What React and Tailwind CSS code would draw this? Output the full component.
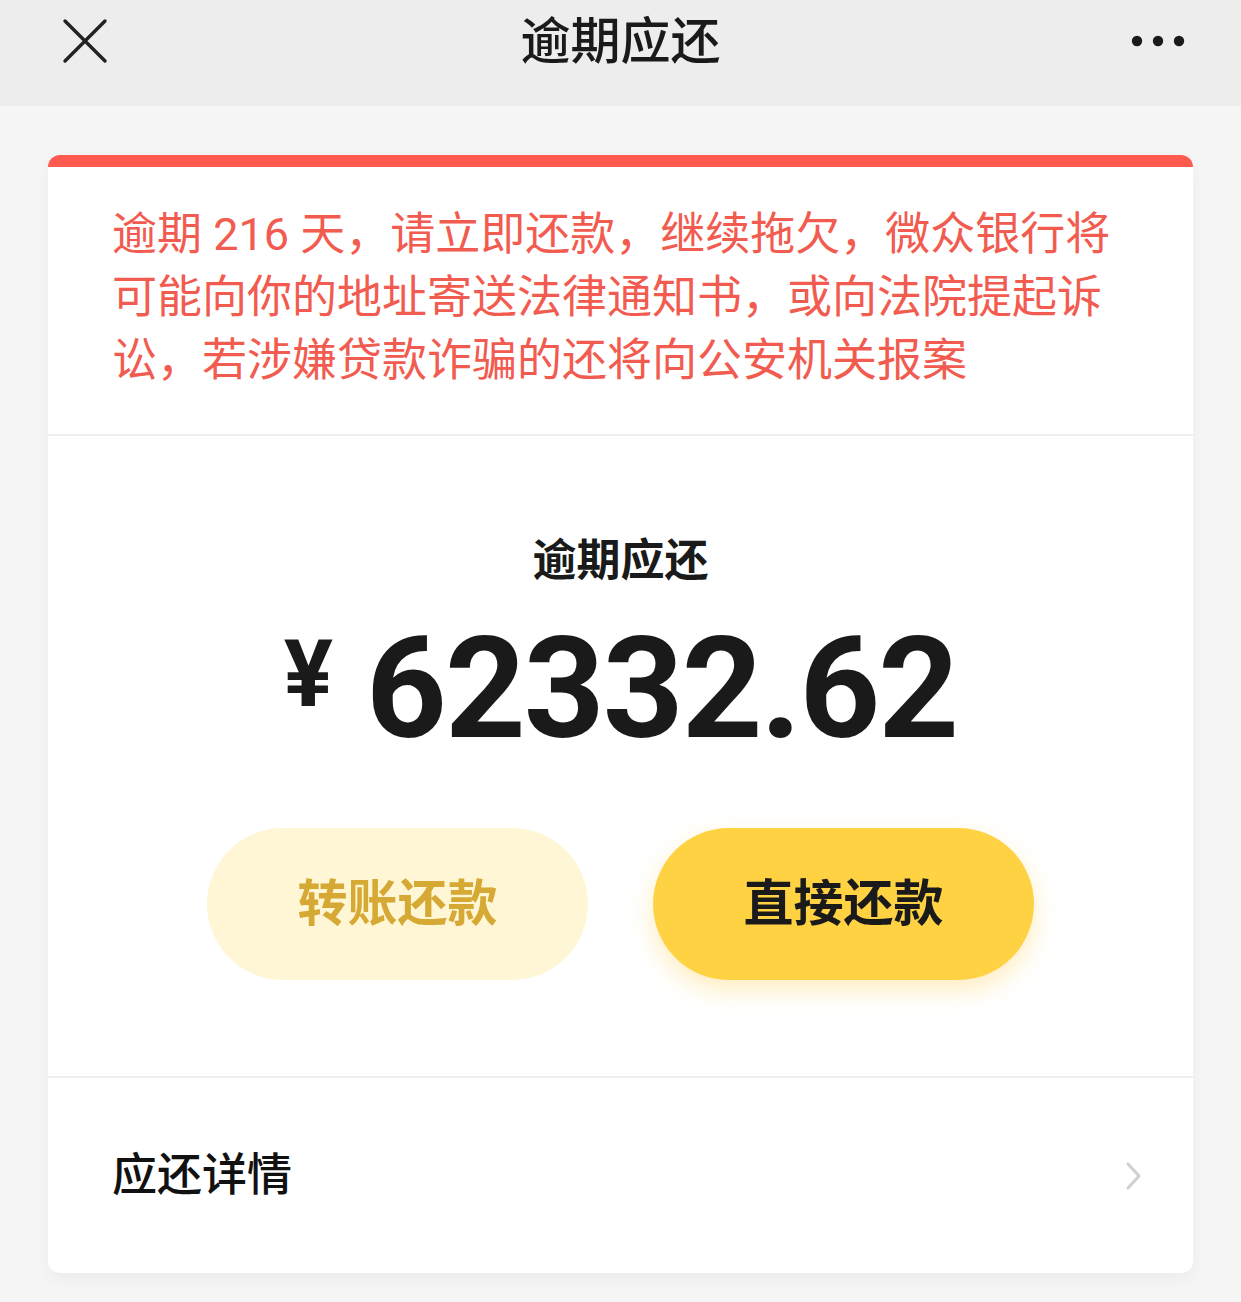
import React from "react";

const CJK = { fontFamily: "Roboto, 'Noto Sans CJK SC', sans-serif" };

const CloseIcon = () => (
  <svg width="46" height="46" viewBox="0 0 46 46" fill="none">
    <path d="M3 3L43 43M43 3L3 43" stroke="#222" strokeWidth="3.4" strokeLinecap="round" />
  </svg>
);

const MoreIcon = () => (
  <svg width="56" height="14" viewBox="0 0 56 14">
    <circle cx="7" cy="7" r="5.2" fill="#1a1a1a" />
    <circle cx="28" cy="7" r="5.2" fill="#1a1a1a" />
    <circle cx="49" cy="7" r="5.2" fill="#1a1a1a" />
  </svg>
);

const Chevron = () => (
  <svg width="18" height="30" viewBox="0 0 18 30" fill="none">
    <path d="M3 3L14 15L3 27" stroke="#cfcfcf" strokeWidth="3" strokeLinecap="round" strokeLinejoin="round" />
  </svg>
);

export default function App() {
  return (
    <div className="min-h-[1302px] w-full bg-[#f5f5f5]" style={CJK}>
      {/* 顶部导航 */}
      <header className="relative h-[106px] bg-[#ededed]">
        <div className="absolute left-[62px] top-[18px]">
          <CloseIcon />
        </div>
        <h1 className="pt-[12px] text-center text-[50px] font-medium leading-[60px] text-[#1a1a1a]">
          逾期应还
        </h1>
        <div className="absolute right-[55px] top-[34px]">
          <MoreIcon />
        </div>
      </header>

      <main className="px-[48px] pt-[49px]">
        <div className="overflow-hidden rounded-[12px] border-t-[12px] border-[#ff5a50] bg-white shadow-[0_6px_16px_rgba(0,0,0,0.04)]">
          {/* 警告文案 */}
          <div className="px-[64px] pt-[36px] pb-[42px]">
            <p className="text-[45px] leading-[63px] text-[#f25b4f]">
              逾期 216 天，请立即还款，继续拖欠，微众银行将可能向你的地址寄送法律通知书，或向法院提起诉讼，若涉嫌贷款诈骗的还将向公安机关报案
            </p>
          </div>

          <div className="h-[2px] bg-[#eeeeee]" />

          {/* 金额 */}
          <div className="flex flex-col items-center pt-[95px] pb-[96px]">
            <div className="text-[44px] font-bold leading-[60px] text-[#1a1a1a]">逾期应还</div>
            <div className="mt-[28px] flex items-start text-[#1a1a1a]" style={{ fontFamily: "Roboto, sans-serif" }}>
              <span className="mt-[11px] mr-[33px] text-[92px] font-bold leading-[90px]">¥</span>
              <span className="text-[141px] font-bold leading-[140px] tracking-[-2px]">62332.62</span>
            </div>
            <div className="mt-[69px] flex gap-[65px]">
              <button className="flex h-[152px] w-[381px] items-center justify-center rounded-full bg-[#fff6d6] text-[50px] font-bold text-[#d6a934]">
                转账还款
              </button>
              <button className="flex h-[152px] w-[381px] items-center justify-center rounded-full bg-[#ffd244] text-[50px] font-bold text-[#1a1a1a] shadow-[0_10px_24px_rgba(255,196,40,0.3)]">
                直接还款
              </button>
            </div>
          </div>

          <div className="h-[2px] bg-[#eeeeee]" />

          {/* 应还详情 */}
          <div className="flex h-[195px] items-center justify-between pl-[64px] pr-[50px]">
            <span className="text-[45px] font-medium text-[#111]">应还详情</span>
            <Chevron />
          </div>
        </div>
      </main>
    </div>
  );
}
